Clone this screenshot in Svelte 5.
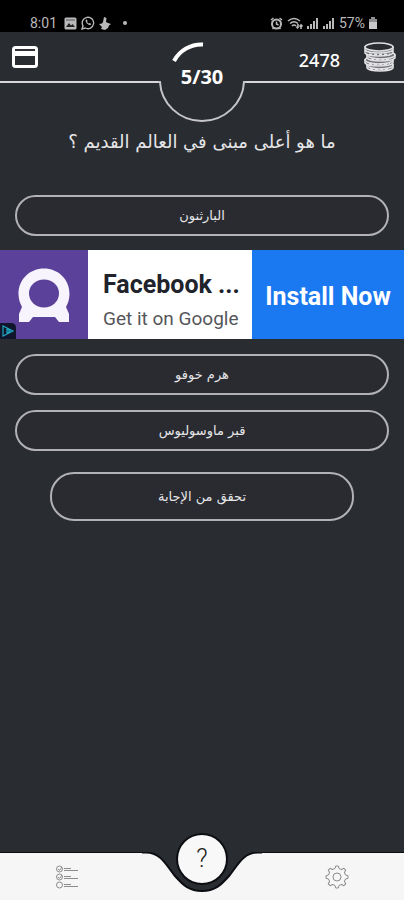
<script>
  let current = 5;
  let total = 30;
  let coins = 2478;
  let selected = null;

  const question = 'ما هو أعلى مبنى في العالم القديم ؟';
  const firstAnswers = ['البارثنون'];
  const otherAnswers = ['هرم خوفو', 'قبر ماوسوليوس'];
  const gearTeeth = [0, 45, 90, 135, 180, 225, 270, 315];
</script>

<div class="screen">
  <div class="status">
    <div class="status-group">
      <span class="clock">8:01</span>
      <svg width="13" height="13" viewBox="0 0 13 13">
        <rect x="0.5" y="0.5" width="12" height="12" rx="1.5" fill="#b9b9bb" />
        <path d="M2 10l3-4 2 2.500 1.500-1.500L11 10z" fill="#222" />
        <path d="M2 3h9" stroke="#555" />
      </svg>
      <svg width="14" height="14" viewBox="0 0 14 14" fill="none" stroke="#b9b9bb" stroke-width="1.4">
        <path d="M1 13l1-3.200A5.700 5.700 0 1 1 4.300 12z" />
        <path d="M4.700 4c-.5 2.500 2.500 5.500 5 5l.4-1.300-1.600-.8-.9.700-1.600-1.700.6-.9-.7-1.500z" fill="#b9b9bb" stroke="none" />
      </svg>
      <svg width="12" height="13" viewBox="0 0 12 13" fill="#b9b9bb">
        <path d="M5 0l2.500 1-.5 4 2 1 3 1-2 1.500L9 11l-3 2-4-1 1-2-3-3 3-.5L4 5z" />
      </svg>
      <span class="dot"></span>
    </div>
    <div class="status-group">
      <svg width="13" height="13" viewBox="0 0 13 13">
        <circle cx="6.500" cy="7" r="4.500" fill="none" stroke="#b9b9bb" stroke-width="2" />
        <path d="M1 3l2.500-2M12 3L9.500 1M2.500 12l1.500-1.500M10.500 12L9 10.500M6.500 4.500V7l2 1" fill="none" stroke="#b9b9bb" stroke-width="1.500" />
      </svg>
      <svg width="16" height="13" viewBox="0 0 16 13" fill="none" stroke="#b9b9bb" stroke-width="1.600">
        <path d="M1 4q6-5 12 0M3 6.500q4-3.500 8 0M5 9q2-2 4 0M11 7v4M9.500 9.500L11 11.500M14 12V8M12.500 9.500L14 8l1.500 1.500" />
      </svg>
      <svg width="12" height="12" viewBox="0 0 12 12" fill="#b9b9bb">
        <path d="M0 9h2v3H0zM3 7h2v5H3zM6 4h2v8H6zM9 1h2v11H9z" />
      </svg>
      <svg width="12" height="12" viewBox="0 0 12 12" fill="#b9b9bb">
        <path d="M0 9h2v3H0zM3 7h2v5H3zM6 4h2v8H6zM9 1h2v11H9z" />
      </svg>
      <span class="clock">57%</span>
      <svg width="8" height="12" viewBox="0 0 8 12">
        <path d="M2 0h4v2h2v10H0V2h2z" fill="#8d8d90" />
        <path d="M0 5h8v7H0z" fill="#c8c8ca" />
      </svg>
    </div>
  </div>

  <header>
    <div class="bar bar-left">
      <button type="button" class="icon-button" aria-label="Card">
        <svg width="26" height="22" viewBox="0 0 26 22">
          <rect x="1.500" y="1.500" width="23" height="19" rx="2" fill="none" stroke="#fff" stroke-width="3" />
          <path d="M2 7.500h22" stroke="#fff" stroke-width="5" />
          <path d="M3 4h20" stroke="#34353b" stroke-width="1.500" />
        </svg>
      </button>
    </div>
    <div class="progress">
      <svg width="88" height="91" viewBox="0 0 88 91" fill="none">
        <path d="M0 50H2C3 71 21 89 44 89S85 71 86 50H88" stroke="#c6c6ca" stroke-width="2" />
        <path d="M16 29A31 31 0 0 1 45 12.500" stroke="#fff" stroke-width="4" />
      </svg>
      <span class="count">{current}/{total}</span>
    </div>
    <div class="bar bar-right">
      <span class="coins">{coins}</span>
      <svg width="32" height="30" viewBox="0 0 32 30" fill="#6f7075" stroke="#e2e2e4" stroke-width="1.500">
        <path d="M3 23v3c3 4 23 4 26 0v-3z" />
        <ellipse cx="16" cy="23" rx="13" ry="4" />
        <path d="M1 18v3c3 4 24 4 28 0v-3z" />
        <ellipse cx="15" cy="18" rx="14" ry="4" />
        <path d="M3 13v3c3 4 24 4 28 0v-3z" />
        <ellipse cx="17" cy="13" rx="14" ry="4" />
        <path d="M1 9v2c3 4 24 4 28 0V9z" />
        <path d="M1 5v3c3 4 24 4 28 0V5z" />
        <ellipse cx="15" cy="5" rx="14" ry="4" fill="#2a2c31" />
        <path d="M5 12.500h21M7 17.500h20M5 22h21M6 27h20" stroke-width="2" stroke-dasharray="3 2" />
      </svg>
    </div>
  </header>

  <main>
    <h1 dir="rtl">{question}</h1>

    <div class="answers">
      {#each firstAnswers as answer}
        <button type="button" class="pill" dir="rtl" aria-pressed={selected === answer} onclick={() => (selected = answer)}>{answer}</button>
      {/each}
    </div>

    <div class="ad">
      <div class="ad-logo">
        <svg width="52" height="54" viewBox="0 0 52 54">
          <path d="M26 0.500C12 0.500 0.500 11 0.500 26C0.500 31 2 35 4 39L1 46V54H11L15 49H37L41 54H51V46L48 39C50 35 51.500 31 51.500 26C51.500 11 40 0.500 26 0.500z" fill="#f8f4fd" />
          <ellipse cx="26" cy="25.500" rx="15" ry="14" fill="#5b4199" />
        </svg>
        <svg class="ad-choices" width="16" height="16" viewBox="0 0 16 16">
          <path d="M0 0h11q5 0 5 5v11H0z" fill="#11162c" />
          <path d="M3 3v10l10-5zM7 6v4l3-2z" fill="none" stroke="#1fa5bd" stroke-width="1.200" />
        </svg>
      </div>
      <div class="ad-text">
        <strong>Facebook ...</strong>
        <span>Get it on Google</span>
      </div>
      <a class="install" href="#install">Install Now</a>
    </div>

    <div class="answers">
      {#each otherAnswers as answer}
        <button type="button" class="pill" dir="rtl" aria-pressed={selected === answer} onclick={() => (selected = answer)}>{answer}</button>
      {/each}
      <button type="button" class="pill check" dir="rtl">تحقق من الإجابة</button>
    </div>
  </main>

  <nav>
    <div class="tab tab-left">
      <button type="button" class="icon-button" aria-label="List">
        <svg width="24" height="24" viewBox="0 0 24 24" fill="none" stroke="#8c8c8e">
          <circle cx="4.500" cy="4" r="3" />
          <circle cx="4.500" cy="12" r="3" />
          <circle cx="4.500" cy="20" r="3" />
          <path d="M3 4l1.500 1.500L7 2M3 12l1.500 1.500L7 10" />
          <path d="M9 3.500h7M9 5.500h14M9 11.500h7M9 13.500h14M9 19.500h7M9 21.500h14" />
        </svg>
      </button>
    </div>
    <div class="notch">
      <svg width="120" height="48" viewBox="0 0 120 48">
        <path d="M0 0.500H4C19 0.500 24 13 33 24C41 33 47 39 60 39S79 33 87 24C96 13 101 0.500 116 0.500H120V48H0z" fill="#f6f6f6" />
        <path d="M0 0.500H4C19 0.500 24 13 33 24C41 33 47 39 60 39S79 33 87 24C96 13 101 0.500 116 0.500H120" fill="none" stroke="#0c0d12" stroke-width="2" />
      </svg>
      <button type="button" class="help" aria-label="Help">?</button>
    </div>
    <div class="tab tab-right">
      <button type="button" class="icon-button" aria-label="Settings">
        <svg width="24" height="24" viewBox="0 0 24 24" fill="none" stroke="#8c8c8e" stroke-linejoin="round">
          {#each gearTeeth as angle}
            <path d="M8.700 4L10 3.500L10.700 1H13.300L14 3.500L15.300 4" transform="rotate({angle} 12 12)" />
          {/each}
          <circle cx="12" cy="12" r="4" />
        </svg>
      </button>
    </div>
  </nav>
</div>

<style>
  :global(body) {
    background: #292c31;
  }

  .screen {
    display: flex;
    flex-direction: column;
    min-height: 100vh;
    background: #292c31;
    color: #e6e6e8;
    font-family: Roboto, "DejaVu Sans", sans-serif;
  }

  button {
    font: inherit;
    color: inherit;
    padding: 0;
    cursor: pointer;
  }

  svg {
    display: block;
    flex: none;
  }

  .status {
    display: flex;
    justify-content: space-between;
    height: 32px;
    box-sizing: border-box;
    padding: 14px 27px 0 30px;
    background: #000;
  }

  .status-group {
    display: flex;
    align-items: center;
    gap: 4px;
    height: 18px;
  }

  .clock {
    color: #b9b9bb;
    font-size: 14px;
    line-height: 18px;
  }

  .clock:first-child {
    margin-right: 3px;
  }

  .dot {
    width: 4px;
    height: 4px;
    margin-left: 8px;
    border-radius: 50%;
    background: #b9b9bb;
  }

  header {
    display: grid;
    grid-template-columns: 1fr 88px 1fr;
    align-items: start;
  }

  .bar {
    display: flex;
    align-items: center;
    height: 51px;
    box-sizing: border-box;
    border-bottom: 2px solid #d6d6da;
  }

  .bar-left {
    padding-left: 12px;
  }

  .bar-right {
    justify-content: flex-end;
    gap: 24px;
    padding-right: 8px;
  }

  .icon-button {
    border: 0;
    background: none;
  }

  .coins {
    color: #fff;
    font-size: 18px;
    line-height: 24px;
    font-family: "Noto Sans", sans-serif;
    font-weight: 500;
    padding-top: 6px;
  }

  .progress {
    position: relative;
  }

  .count {
    position: absolute;
    inset: 33px 0 auto;
    color: #fff;
    font-family: "Noto Sans", sans-serif;
    font-size: 20px;
    font-weight: 700;
    line-height: 24px;
    text-align: center;
  }

  main {
    flex: 1;
  }

  h1 {
    margin: 4px 16px 38px;
    font-family: "DejaVu Sans", sans-serif;
    font-size: 18px;
    font-weight: 400;
    line-height: 30px;
    text-align: center;
  }

  .answers {
    display: flex;
    flex-direction: column;
    gap: 15px;
    padding: 0 15px;
  }

  .pill {
    height: 41px;
    border: 2px solid #b2b2b6;
    border-radius: 24px;
    background: #292b31;
    font-family: "DejaVu Sans", sans-serif;
    font-size: 13px;
    line-height: 20px;
  }

  .check {
    height: 49px;
    margin: 6px 35px 0;
  }

  .ad {
    display: flex;
    height: 89px;
    margin: 14px 0 15px;
    background: #fff;
  }

  .ad-logo {
    position: relative;
    display: flex;
    align-items: center;
    justify-content: center;
    flex: none;
    width: 88px;
    background: #5b4199;
  }

  .ad-choices {
    position: absolute;
    left: 0;
    bottom: 0;
  }

  .ad-text {
    display: flex;
    flex: 1;
    flex-direction: column;
    justify-content: center;
    gap: 4px;
    min-width: 0;
    padding: 12px 8px 0 15px;
    white-space: nowrap;
  }

  .ad-text strong {
    color: #20232b;
    font-size: 25px;
    font-weight: 700;
    line-height: 32px;
  }

  .ad-text span {
    color: #55565a;
    font-size: 19px;
    line-height: 28px;
  }

  .install {
    display: flex;
    align-items: center;
    justify-content: center;
    flex: none;
    width: 152px;
    padding-top: 4px;
    box-sizing: border-box;
    background: #1a78f0;
    color: #fff;
    font-size: 25px;
    font-weight: 700;
    text-decoration: none;
  }

  nav {
    display: grid;
    grid-template-columns: 1fr 120px 1fr;
    height: 48px;
  }

  .tab {
    display: flex;
    align-items: center;
    justify-content: center;
    background: #f6f6f6;
    border-top: 1px solid #0c0d12;
  }

  .tab-left {
    padding-right: 8px;
  }

  .tab-right {
    padding-left: 8px;
  }

  .notch {
    position: relative;
  }

  .help {
    position: absolute;
    top: -17px;
    left: 50%;
    width: 48px;
    height: 48px;
    margin-left: -24px;
    border: 0;
    border-radius: 50%;
    background: #f8f8f8;
    box-shadow: 0 0 0 2px #0c0d12;
    color: #222;
    font-size: 25px;
    font-weight: 300;
    line-height: 48px;
  }
</style>
